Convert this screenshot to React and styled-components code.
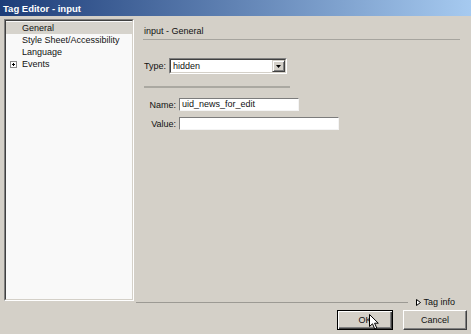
import React from "react";
import styled, { createGlobalStyle } from "styled-components";

const GlobalStyle = createGlobalStyle`
  html, body {
    margin: 0;
    padding: 0;
    background: #d4d0c8;
  }
  body {
    font-family: "Liberation Sans", Arial, sans-serif;
    font-size: 9px;
    color: #111;
  }
`;

const Dialog = styled.div`
  width: 471px;
  height: 334px;
  display: flex;
  flex-direction: column;
  background: #d4d0c8;
  overflow: hidden;
`;

const TitleBar = styled.div`
  flex: none;
  height: 16px;
  display: flex;
  align-items: center;
  padding-left: 3px;
  background: linear-gradient(to right, #1c3c78, #a6caf0);
  color: #fff;
  font-weight: bold;
  font-size: 9.5px;
`;

const Main = styled.div`
  flex: 1;
  min-height: 0;
  display: flex;
  padding-left: 4px;
`;

const TreeFrame = styled.div`
  flex: none;
  width: 130px;
  height: 282px;
  margin-top: 3px;
  box-sizing: border-box;
  border: 1px solid;
  border-color: #808080 #ffffff #ffffff #808080;
`;

const Tree = styled.ul`
  list-style: none;
  margin: 0;
  padding: 1px 0 0;
  height: 100%;
  box-sizing: border-box;
  background: #f9f9f9;
  border: 1px solid;
  border-color: #404040 #d4d0c8 #d4d0c8 #404040;
`;

const TreeRow = styled.li`
  display: flex;
  align-items: center;
  height: 12px;
  line-height: 12px;
  padding-left: 4px;
  background: ${(p) => (p.$selected ? "#d6d3cc" : "transparent")};
`;

const Expander = styled.span`
  flex: none;
  width: 12px;
  display: flex;
  align-items: center;
`;

const RightPane = styled.div`
  flex: 1;
  display: flex;
  flex-direction: column;
  padding-left: 2px;
`;

const Content = styled.div`
  padding: 0 11px 0 7px;
`;

const PaneHeader = styled.div`
  margin-top: 9px;
  line-height: 12px;
  padding: 0 0 2px 1px;
  border-bottom: 1px solid #a6a49e;
`;

const TypeRow = styled.div`
  display: flex;
  align-items: center;
  margin-top: 18px;
  padding-left: 1px;
`;

const TypeLabel = styled.span`
  width: 25px;
`;

const Select = styled.div`
  width: 118px;
  height: 16px;
  box-sizing: border-box;
  display: flex;
  border: 1px solid;
  border-color: #808080 #ffffff #ffffff #808080;
`;

const SelectInner = styled.div`
  flex: 1;
  display: flex;
  background: #fff;
  border: 1px solid;
  border-color: #404040 #d4d0c8 #d4d0c8 #404040;
`;

const SelectValue = styled.span`
  flex: 1;
  padding-left: 2px;
  line-height: 12px;
`;

const DropButton = styled.span`
  flex: none;
  width: 13px;
  box-sizing: border-box;
  display: flex;
  align-items: center;
  justify-content: center;
  background: #d4d0c8;
  border: 1px solid;
  border-color: #d4d0c8 #404040 #404040 #d4d0c8;
  box-shadow: inset 1px 1px 0 #ffffff, inset -1px -1px 0 #808080;
`;

const Divider = styled.div`
  width: 146px;
  height: 2px;
  margin: 12px 0 0 1px;
  background: #aaa8a1;
`;

const FieldGrid = styled.div`
  display: grid;
  grid-template-columns: 33px auto;
  column-gap: 3px;
  row-gap: 6px;
  align-items: center;
  justify-items: start;
  margin-top: 10px;
`;

const FieldLabel = styled.span`
  justify-self: end;
`;

const TextBox = styled.div`
  width: ${(p) => p.$width}px;
  height: 13px;
  box-sizing: border-box;
  background: #fff;
  border: 1px solid;
  border-color: #7c7c7c #f4f4f4 #f4f4f4 #7c7c7c;
  padding-left: 2px;
  line-height: 11px;
`;

const TagInfoRow = styled.div`
  margin-top: auto;
  height: 8px;
  display: flex;
  align-items: center;
  margin-right: 16px;
`;

const TagLine = styled.div`
  flex: 1;
  height: 1px;
  background: #9c9a94;
`;

const TagInfo = styled.span`
  display: flex;
  align-items: center;
  gap: 2px;
  margin-left: 8px;
`;

const ButtonRow = styled.div`
  flex: none;
  height: 28px;
  display: flex;
  align-items: center;
  justify-content: flex-end;
  gap: 10px;
  padding-right: 4px;
`;

const Button = styled.div`
  position: relative;
  width: ${(p) => p.$width}px;
  height: 20px;
  box-sizing: border-box;
  display: flex;
  align-items: center;
  justify-content: center;
  background: #d4d0c8;
  border: 1px solid;
  border-color: ${(p) =>
    p.$default ? "#000" : "#ffffff #404040 #404040 #ffffff"};
  box-shadow: ${(p) =>
    p.$default
      ? "inset 1px 1px 0 #ffffff, inset -1px -1px 0 #404040, inset -2px -2px 0 #808080"
      : "inset -1px -1px 0 #808080"};
`;

const Cursor = styled.svg`
  position: absolute;
  left: 31px;
  top: 3px;
`;

function PlusBox() {
  return (
    <svg width="7" height="7" viewBox="0 0 7 7">
      <rect x="0.5" y="0.5" width="6" height="6" fill="#fff" stroke="#8a8a8a" />
      <path d="M2 3.5H5M3.5 2V5" stroke="#000" />
    </svg>
  );
}

export default function App() {
  return (
    <Dialog>
      <GlobalStyle />
      <TitleBar>Tag Editor - input</TitleBar>
      <Main>
        <TreeFrame>
          <Tree>
            <TreeRow $selected>
              <Expander />
              General
            </TreeRow>
            <TreeRow>
              <Expander />
              Style Sheet/Accessibility
            </TreeRow>
            <TreeRow>
              <Expander />
              Language
            </TreeRow>
            <TreeRow>
              <Expander>
                <PlusBox />
              </Expander>
              Events
            </TreeRow>
          </Tree>
        </TreeFrame>
        <RightPane>
          <Content>
            <PaneHeader>input - General</PaneHeader>
            <TypeRow>
              <TypeLabel>Type:</TypeLabel>
              <Select>
                <SelectInner>
                  <SelectValue>hidden</SelectValue>
                  <DropButton>
                    <svg width="5" height="3" viewBox="0 0 5 3">
                      <path d="M0 0H5L2.5 3Z" fill="#000" />
                    </svg>
                  </DropButton>
                </SelectInner>
              </Select>
            </TypeRow>
            <Divider />
            <FieldGrid>
              <FieldLabel>Name:</FieldLabel>
              <TextBox $width={120}>uid_news_for_edit</TextBox>
              <FieldLabel>Value:</FieldLabel>
              <TextBox $width={160} />
            </FieldGrid>
          </Content>
          <TagInfoRow>
            <TagLine />
            <TagInfo>
              <svg width="5" height="7" viewBox="0 0 5 7">
                <path d="M0.5 0.5L4.5 3.5L0.5 6.5Z" fill="#fff" stroke="#000" />
              </svg>
              Tag info
            </TagInfo>
          </TagInfoRow>
        </RightPane>
      </Main>
      <ButtonRow>
        <Button $width={56} $default>
          OK
          <Cursor width="10" height="16" viewBox="0 0 10 16">
            <path
              d="M0.5 0.5L0.5 12.5L3.5 9.8L5.8 15L7.8 14.1L5.6 9.2L9.3 9.2Z"
              fill="#fff"
              stroke="#000"
              strokeLinejoin="miter"
            />
          </Cursor>
        </Button>
        <Button $width={64}>Cancel</Button>
      </ButtonRow>
    </Dialog>
  );
}
